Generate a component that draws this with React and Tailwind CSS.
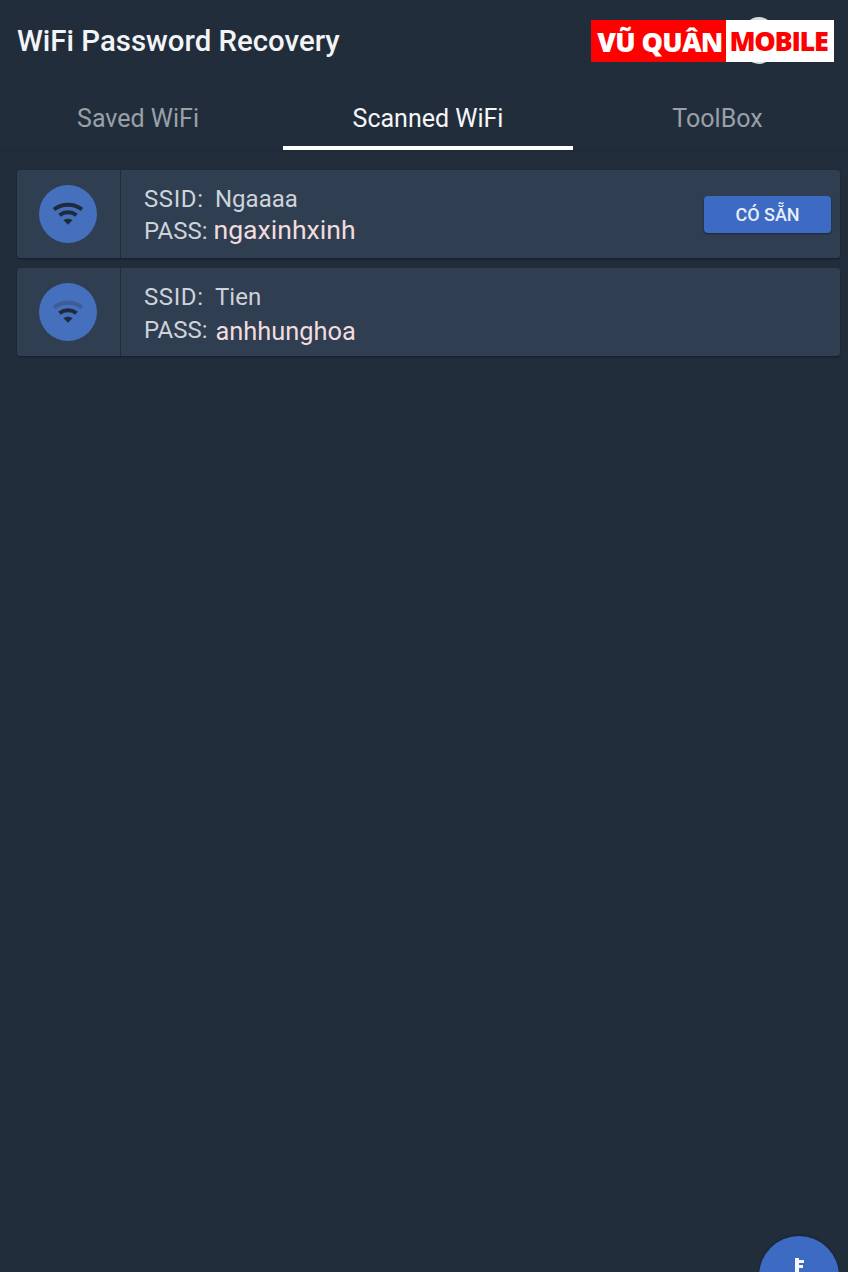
const wifiArcs = {
  full: ['#1f2b3d', '#1f2b3d', '#1f2b3d'],
  weak: ['#3f5c94', '#1f2b3d', '#1f2b3d'],
};

function WifiBadge({ level }) {
  const c = wifiArcs[level];
  return (
    <div className="flex h-[58px] w-[58px] items-center justify-center rounded-full bg-[#4470bd]">
      <svg width="32" height="24" viewBox="0 0 32 24" fill="none" strokeLinecap="butt">
        <path d="M2 7.5C10 1.2 22 1.2 30 7.5" stroke={c[0]} strokeWidth="4" />
        <path d="M7.5 13.2C12.6 9.4 19.4 9.4 24.5 13.2" stroke={c[1]} strokeWidth="4" />
        <path d="M11.5 18.2L16 22.8L20.5 18.2C17.8 16.2 14.2 16.2 11.5 18.2Z" fill={c[2]} />
      </svg>
    </div>
  );
}

function WifiCard({ ssid, pass, level, passClass, valueClass, action }) {
  return (
    <div className="flex h-[88px] rounded-[3px] bg-[#303e52] shadow-[0_1px_2px_rgba(15,22,32,0.7)]">
      <div className="flex w-[104px] shrink-0 items-center justify-center border-r border-[#222d3c] pr-[2px]">
        <WifiBadge level={level} />
      </div>
      <div className="flex flex-1 flex-col pl-[23px] text-[24px] leading-[30px] text-[#cdd3d9]">
        <div className="mt-[14px] flex items-baseline">
          <span className="w-[71px] tracking-[0.6px]">SSID:</span>
          <span>{ssid}</span>
        </div>
        <div className={`flex items-baseline ${passClass}`}>
          <span>PASS:</span>
          <span className={`text-[#f0dcdf] ${valueClass}`}>{pass}</span>
        </div>
      </div>
      {action && (
        <div className="flex items-center pr-[9px]">
          <button className="h-[37px] w-[127px] rounded-[4px] bg-[#3d6bc4] text-[18px] font-medium text-[#e8eef8] shadow-[0_1px_2px_rgba(15,22,32,0.6)]">
            {action}
          </button>
        </div>
      )}
    </div>
  );
}

export default function App() {
  return (
    <div className="relative h-[1272px] w-[848px] overflow-hidden bg-[#222d3c] font-['Roboto',sans-serif]">
      {/* Header */}
      <header className="flex h-[82px] items-center pl-[17px]">
        <h1 className="text-[29.4px] font-medium text-[#f3f4f6]">WiFi Password Recovery</h1>
      </header>

      {/* Vòng tròn menu bị logo che */}
      <div className="absolute left-[744px] top-[17px] h-[47px] w-[30px] rounded-full bg-[#d8dade]" />

      {/* Logo */}
      <div className="absolute left-[591px] top-[20px] flex h-[42px] w-[243px] whitespace-nowrap font-['Open_Sans',sans-serif] text-[27px] font-extrabold">
        <div className="flex w-[135px] items-center justify-center bg-[#fe0000] pl-[3px] pt-[2px] tracking-[-0.7px] text-white">
          VŨ QUÂN
        </div>
        <div className="flex flex-1 items-center justify-center bg-white pr-[3px] tracking-[-1.3px] text-[#fe0000]">
          MOBILE
        </div>
      </div>

      {/* Tabs */}
      <nav className="flex h-[69px] border-b border-[#1d2735] text-[25px]">
        <div className="flex w-[283px] items-center justify-center pr-[7px] pt-[5px] text-[#98a0a8]">Saved WiFi</div>
        <div className="flex w-[290px] items-center justify-center border-b-4 border-white pt-[9px] text-[#f5f6f7]">Scanned WiFi</div>
        <div className="flex flex-1 items-center justify-center pl-[14px] pt-[5px] text-[#98a0a8]">ToolBox</div>
      </nav>

      {/* Danh sách WiFi */}
      <main className="flex flex-col gap-[10px] pl-[17px] pr-[8px] pt-[19px]">
        <WifiCard
          ssid="Ngaaaa"
          pass="ngaxinhxinh"
          level="full"
          passClass="mt-[1px]"
          valueClass="ml-[6px] text-[26.6px]"
          action="CÓ SẴN"
        />
        <WifiCard
          ssid="Tien"
          pass="anhhunghoa"
          level="weak"
          passClass="mt-[2px]"
          valueClass="ml-[8px] translate-y-[2px] text-[25.4px]"
        />
      </main>

      {/* FAB */}
      <div className="absolute left-[759px] top-[1236px] flex h-[80px] w-[80px] justify-center rounded-full bg-[#3d6bc4] pt-[22px] shadow-[0_-1px_2px_rgba(15,22,32,0.5)]">
        <svg width="12" height="36" viewBox="0 0 12 36" fill="#f4f6fa">
          <path d="M2 0H6V2H11V5H6V7H10V10H6V36H2Z" />
        </svg>
      </div>
    </div>
  );
}
